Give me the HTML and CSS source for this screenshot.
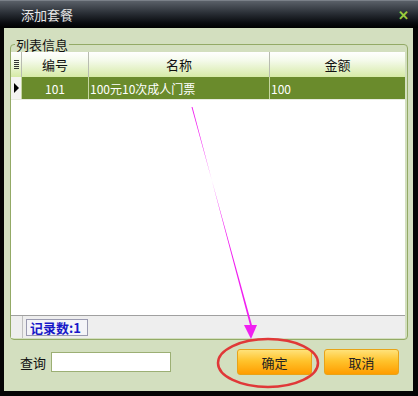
FILE: index.html
```html
<!DOCTYPE html>
<html lang="zh-CN">
<head>
  <meta charset="UTF-8" />
  <title>添加套餐</title>
  <link rel="stylesheet" href="styles.css">
</head>
<body>
  <div class="window">
    <div class="titlebar">
      <span class="title">添加套餐</span>
      <span class="close">✕</span>
    </div>
    <div class="content">
      <fieldset class="list">
        <legend>列表信息</legend>
        <div class="grid">
          <div class="row head">
            <div class="cell ind"><span class="lines"></span></div>
            <div class="cell c1">编号</div>
            <div class="cell c2">名称</div>
            <div class="cell c3">金额</div>
          </div>
          <div class="row data">
            <div class="cell ind"><span class="arrow"></span></div>
            <div class="cell c1">101</div>
            <div class="cell c2 left">100元10次成人门票</div>
            <div class="cell c3 left">100</div>
          </div>
          <div class="filler"></div>
          <div class="footer">
            <div class="foot-ind"></div>
            <div class="count">记录数:1</div>
          </div>
        </div>
      </fieldset>
      <div class="actions">
        <label class="search">查询 <input type="text" class="search-box"></label>
        <div class="buttons">
          <button class="btn">确定</button>
          <button class="btn">取消</button>
        </div>
      </div>
    </div>
    <svg class="marks" width="418" height="396" viewBox="0 0 418 396">
      <polygon points="191.5,107 192.5,107 250.5,327 252.5,327" fill="#f020f0"/>
      <polygon points="244,325 257,325 251,339" fill="#f020f0"/>
      <ellipse cx="268" cy="363" rx="50" ry="24" fill="none" stroke="#e03838" stroke-width="2.5"/>
    </svg>
  </div>
</body>
</html>
```

FILE: styles.css
```css
body {
  margin: 0;
  font-family: "Noto Sans CJK SC", "Liberation Sans", sans-serif;
  font-size: 12px;
}

.window {
  position: relative;
  width: 418px;
  height: 396px;
  background-color: #050505;
  display: flex;
  flex-direction: column;
  box-sizing: border-box;
  padding: 0 5px 5px 4px;
}

.titlebar {
  height: 28px;
  margin: 0 -5px 0 -4px;
  background: linear-gradient(#5a6068, #2a2f36 45%, #0a0c10 80%, #000);
  border-top: 1px solid #7a8088;
  box-sizing: border-box;
  display: flex;
  align-items: center;
  justify-content: space-between;
  padding: 0 9px 0 21px;
  color: #e8e8e8;
}

.title {
  font-size: 13px;
}

.close {
  color: #9ccc3c;
  font-weight: bold;
  font-size: 13px;
}

.content {
  flex: 1;
  background-color: #d3dfbf;
  padding: 9px 5px 0 6px;
  display: flex;
  flex-direction: column;
}

.list {
  margin: 0;
  padding: 0 2px 1px 0;
  border: 1px solid #93aa66;
  border-radius: 4px;
}

.list legend {
  padding: 0 1px;
  margin-left: 4px;
  font-size: 13px;
  line-height: 15px;
  color: #111;
}

.grid {
  height: 286px;
  display: flex;
  flex-direction: column;
  background-color: #fff;
}

.row {
  display: flex;
}

.cell {
  border-right: 1px solid #c8ccc0;
  box-sizing: border-box;
  text-align: center;
  display: flex;
  align-items: center;
  justify-content: center;
}

.cell.left {
  justify-content: flex-start;
  padding-left: 1px;
}

.ind { width: 11px; }
.c1 { width: 67px; }
.c2 { width: 181px; }
.c3 { flex: 1; border-right: none; }

.head {
  height: 25px;
  background: linear-gradient(#ffffff, #f4faea 35%, #d6eaa6);
  color: #111;
  font-size: 13px;
}

.head .cell {
  border-right-color: #b8bcb0;
}

.lines {
  width: 5px;
  height: 9px;
  background: repeating-linear-gradient(#333 0 1px, transparent 1px 2px);
}

.data {
  height: 22px;
  background-color: #6a8b2c;
  color: #fff;
  font-size: 12px;
  border-bottom: 1px solid #e8ecdf;
}

.data .cell {
  border-right-color: #c6d6a0;
}

.data .ind {
  background-color: #f4f4f0;
}

.arrow {
  width: 0;
  height: 0;
  border-top: 5px solid transparent;
  border-bottom: 5px solid transparent;
  border-left: 5px solid #000;
}

.filler {
  flex: 1;
}

.footer {
  height: 22px;
  background-color: #eeeeee;
  border-top: 1px solid #a0a0a0;
  display: flex;
  align-items: center;
}

.foot-ind {
  width: 11px;
  height: 100%;
  border-right: 1px solid #c0c0c0;
}

.count {
  margin-left: 3px;
  width: 62px;
  height: 17px;
  border: 1px solid #9a9ab0;
  box-sizing: border-box;
  color: #1818c8;
  font-weight: bold;
  font-size: 13px;
  line-height: 15px;
  padding-left: 3px;
  background-color: #f4f4f8;
}

.actions {
  flex: 1;
  display: flex;
  align-items: center;
  justify-content: space-between;
  padding: 0 9px 7px 10px;
}

.search {
  font-size: 13px;
  color: #111;
  display: flex;
  align-items: center;
  gap: 5px;
}

.search-box {
  width: 120px;
  height: 20px;
  box-sizing: border-box;
  border: 1px solid #9caf74;
  margin: 0;
  padding: 0;
}

.buttons {
  display: flex;
  gap: 12px;
}

.btn {
  width: 75px;
  height: 26px;
  border: 1px solid #e8a318;
  border-radius: 3px;
  background: linear-gradient(#ffe27a, #ffc32c 45%, #ff9d00);
  font-family: inherit;
  font-size: 13px;
  color: #222;
  padding: 0;
}

.marks {
  position: absolute;
  left: 0;
  top: 0;
  pointer-events: none;
}
```
